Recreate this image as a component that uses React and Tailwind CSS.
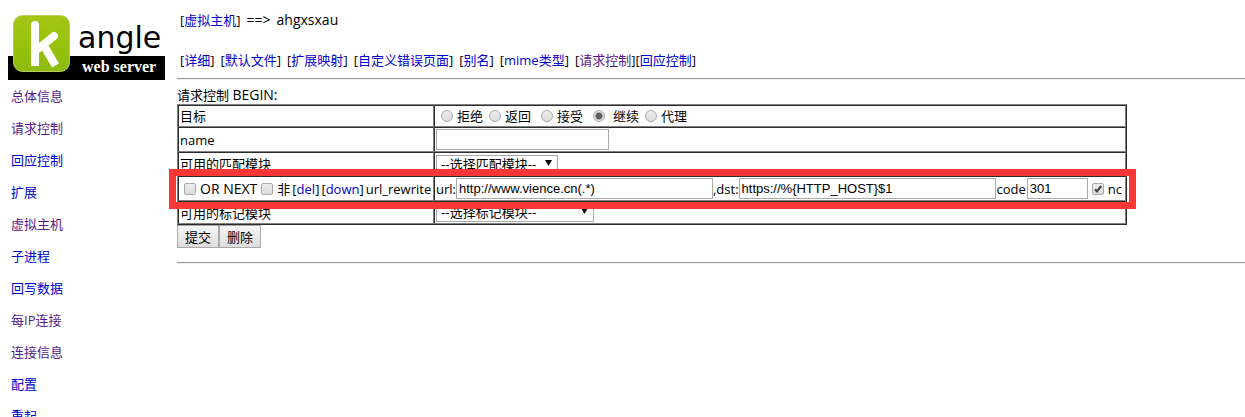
const SIDE_LINKS = [
    { label: "总体信息", visited: true },
    { label: "请求控制", visited: true },
    { label: "回应控制" },
    { label: "扩展" },
    { label: "虚拟主机", visited: true },
    { label: "子进程" },
    { label: "回写数据" },
    { label: "每IP连接", visited: true },
    { label: "连接信息", visited: true },
    { label: "配置" },
    { label: "重起" },
];

const TABS = [
    { label: "详细" },
    { label: "默认文件" },
    { label: "扩展映射" },
    { label: "自定义错误页面" },
    { label: "别名" },
    { label: "mime类型" },
];

const TARGETS = [
    { label: "拒绝", style: "gap-1 mr-1.5" },
    { label: "返回", style: "gap-1 mr-2.5" },
    { label: "接受", style: "gap-1 mr-2.5" },
    { label: "继续", style: "gap-2 mr-1.5", checked: true },
    { label: "代理", style: "gap-1" },
];

export default function App() {
    return (
        <div className="flex h-screen overflow-hidden bg-white font-['Open_Sans','Noto_Sans_CJK_SC',sans-serif] text-[13px] leading-[18px] text-black">
            <aside className="w-[177px] shrink-0 pt-3 pl-2">
                <Logo />
                <nav className="mt-[7px] flex flex-col items-start gap-3.5 pl-[3px]">
                    {SIDE_LINKS.map((item) => (
                        <Link key={item.label} visited={item.visited}>
                            {item.label}
                        </Link>
                    ))}
                </nav>
            </aside>

            <main className="min-w-0 flex-1 pt-[11px]">
                <div className="flex gap-1.5 pl-[3px]">
                    <span>
                        [<Link>虚拟主机</Link>]
                    </span>
                    <span className="text-sm leading-[18px]">==&gt;</span>
                    <span className="text-sm leading-[18px]">ahgxsxau</span>
                </div>
                <nav className="mt-[22px] flex gap-1.5 pl-[3px]">
                    {TABS.map((tab) => (
                        <span key={tab.label}>
                            [<Link>{tab.label}</Link>]
                        </span>
                    ))}
                    <span>
                        [<Link visited>请求控制</Link>][<Link>回应控制</Link>]
                    </span>
                </nav>
                <Rule className="mt-[9px] mb-1.5" />

                <form onSubmit={(e) => e.preventDefault()}>
                    <p>
                        请求控制{" "}
                        <span className="text-sm leading-[18px]">BEGIN:</span>
                    </p>
                    <table className="border-separate border-spacing-0 border border-t-[#808080] border-l-[#808080] border-r-[#2c2c2c] border-b-[#2c2c2c] whitespace-nowrap">
                        <colgroup>
                            <col className="w-[256px]" />
                            <col />
                        </colgroup>
                        <tbody>
                            <tr className="h-[22px]">
                                <Cell>目标</Cell>
                                <Cell>
                                    <div className="flex pl-[5px]">
                                        {TARGETS.map((t) => (
                                            <label
                                                key={t.label}
                                                className={`flex items-center ${t.style}`}
                                            >
                                                <input
                                                    type="radio"
                                                    name="target"
                                                    defaultChecked={t.checked}
                                                    className="size-3 appearance-none rounded-full border border-[#a9a9a9] bg-linear-to-b from-[#eeeeee] to-[#dcdcdc] checked:bg-[radial-gradient(circle,#606060_3px,#e4e4e4_4px)]"
                                                />
                                                {t.label}
                                            </label>
                                        ))}
                                    </div>
                                </Cell>
                            </tr>
                            <tr className="h-[25px]">
                                <Cell>
                                    <label htmlFor="name">name</label>
                                </Cell>
                                <Cell>
                                    <TextBox id="name" className="w-[173px]" />
                                </Cell>
                            </tr>
                            <tr className="h-6">
                                <Cell>
                                    <label htmlFor="acl">可用的匹配模块</label>
                                </Cell>
                                <Cell>
                                    <Select
                                        id="acl"
                                        className="w-[122px]"
                                        option="--选择匹配模块--"
                                    />
                                </Cell>
                            </tr>
                            <tr className="relative h-[25px]">
                                <Cell>
                                    <div className="flex items-center gap-0.5 pl-1">
                                        <label className="flex items-center gap-1">
                                            <CheckBox />
                                            <span className="text-sm leading-[18px]">
                                                OR NEXT
                                            </span>
                                        </label>
                                        <label className="ml-0.5 flex items-center gap-1">
                                            <CheckBox />非
                                        </label>
                                        <span>
                                            [<Link>del</Link>]
                                        </span>
                                        <span>
                                            [<Link>down</Link>]
                                        </span>
                                        <span>url_rewrite</span>
                                    </div>
                                    {/* Red frame around the rewrite rule */}
                                    <div className="pointer-events-none absolute -top-[7px] -right-[10px] -bottom-2 -left-[9px] z-10 border-7 border-[#fc3836]" />
                                </Cell>
                                <Cell>
                                    <div className="flex items-center">
                                        <label htmlFor="url">url:</label>
                                        <TextBox
                                            id="url"
                                            className="w-[257px]"
                                            value="http://www.vience.cn(.*)"
                                        />
                                        <label htmlFor="dst">,dst:</label>
                                        <TextBox
                                            id="dst"
                                            className="w-[257px]"
                                            value="https://%{HTTP_HOST}$1"
                                        />
                                        <label htmlFor="code" className="px-px">
                                            code
                                        </label>
                                        <TextBox
                                            id="code"
                                            className="w-[61px]"
                                            value="301"
                                        />
                                        <label className="ml-1 flex items-center gap-1 pr-0.5">
                                            <CheckBox checked />
                                            nc
                                        </label>
                                    </div>
                                </Cell>
                            </tr>
                            <tr className="h-[23px]">
                                <Cell>
                                    <label htmlFor="mark">可用的标记模块</label>
                                </Cell>
                                <Cell>
                                    <Select
                                        id="mark"
                                        className="w-[158px]"
                                        option="--选择标记模块--"
                                    />
                                </Cell>
                            </tr>
                        </tbody>
                    </table>
                    <div className="flex">
                        <Button type="submit">提交</Button>
                        <Button type="button">删除</Button>
                    </div>
                </form>
                <Rule className="mt-3.5" />
            </main>
        </div>
    );
}

function Link({ visited, children }) {
    return (
        <a href="#" className={visited ? "text-[#551a8b]" : "text-[#0000cc]"}>
            {children}
        </a>
    );
}

function Rule({ className }) {
    return (
        <hr
            className={`h-0.5 border-t border-b border-t-[#9a9a9a] border-b-[#eeeeee] ${className}`}
        />
    );
}

function Cell({ children }) {
    return (
        <td className="border border-t-[#2c2c2c] border-l-[#2c2c2c] border-r-[#808080] border-b-[#808080] px-px py-0">
            {children}
        </td>
    );
}

function TextBox({ id, value, className }) {
    return (
        <input
            id={id}
            type="text"
            defaultValue={value}
            className={`block h-[21px] border border-[#a9a9a9] bg-white px-0.5 font-['Liberation_Sans',sans-serif] ${className}`}
        />
    );
}

function CheckBox({ checked }) {
    return (
        <span className="relative block size-3">
            <input
                type="checkbox"
                defaultChecked={checked}
                className="block size-3 appearance-none rounded-xs border border-[#a9a9a9] bg-linear-to-b from-[#eeeeee] to-[#dcdcdc]"
            />
            {checked && (
                <svg
                    viewBox="0 0 12 12"
                    className="pointer-events-none absolute inset-0 size-3"
                >
                    <path
                        d="M3 6.2 L5 8.4 L9.2 3"
                        fill="none"
                        stroke="#444"
                        strokeWidth="2.2"
                    />
                </svg>
            )}
        </span>
    );
}

function Select({ id, option, className }) {
    return (
        <div className={`relative ${className}`}>
            <select
                id={id}
                className="block h-[19px] w-full appearance-none border border-[#a9a9a9] bg-white pl-1 font-['Liberation_Sans','Noto_Sans_CJK_SC',sans-serif] leading-[17px]"
            >
                <option>{option}</option>
            </select>
            <svg
                viewBox="0 0 7 6"
                className="pointer-events-none absolute top-[5px] right-1.5 h-1.5 w-[7px]"
            >
                <path d="M0 0 H7 L3.5 6 Z" fill="#000" />
            </svg>
        </div>
    );
}

function Button({ type, children }) {
    return (
        <button
            type={type}
            className="h-[23px] border border-[#a9a9a9] bg-linear-to-b from-[#f6f6f6] to-[#dddddd] px-[7px]"
        >
            {children}
        </button>
    );
}

function Logo() {
    return (
        <svg
            viewBox="0 0 157 68"
            role="img"
            aria-label="kangle web server"
            className="block h-[68px] w-[157px]"
        >
            <defs>
                <linearGradient id="green" x1="0" y1="0" x2="0" y2="1">
                    <stop offset="0" stopColor="#a3c614" />
                    <stop offset="0.5" stopColor="#97c30c" />
                    <stop offset="1" stopColor="#8dbb10" />
                </linearGradient>
            </defs>
            <rect y="44" width="157" height="24" fill="#000" />
            <rect
                x="5.5"
                y="3.5"
                width="56"
                height="56"
                rx="9"
                fill="url(#green)"
                stroke="#b5cf62"
            />
            {/* The k mark: stem, arm, leg */}
            <g fill="none" stroke="#fff" strokeWidth="8">
                <path d="M27 13 V36" strokeLinecap="round" />
                <path d="M27 32 V54" />
                <path d="M30 37 L46 24" strokeLinecap="round" />
                <path d="M35 32 L47.5 53.500" />
            </g>
            <text
                x="70"
                y="36"
                fontSize="30"
                fontFamily="DejaVu Sans, sans-serif"
            >
                angle
            </text>
            <text
                x="74"
                y="60"
                fontSize="16"
                fontWeight="bold"
                fontFamily="Liberation Serif, serif"
                fill="#fff"
            >
                web server
            </text>
        </svg>
    );
}
